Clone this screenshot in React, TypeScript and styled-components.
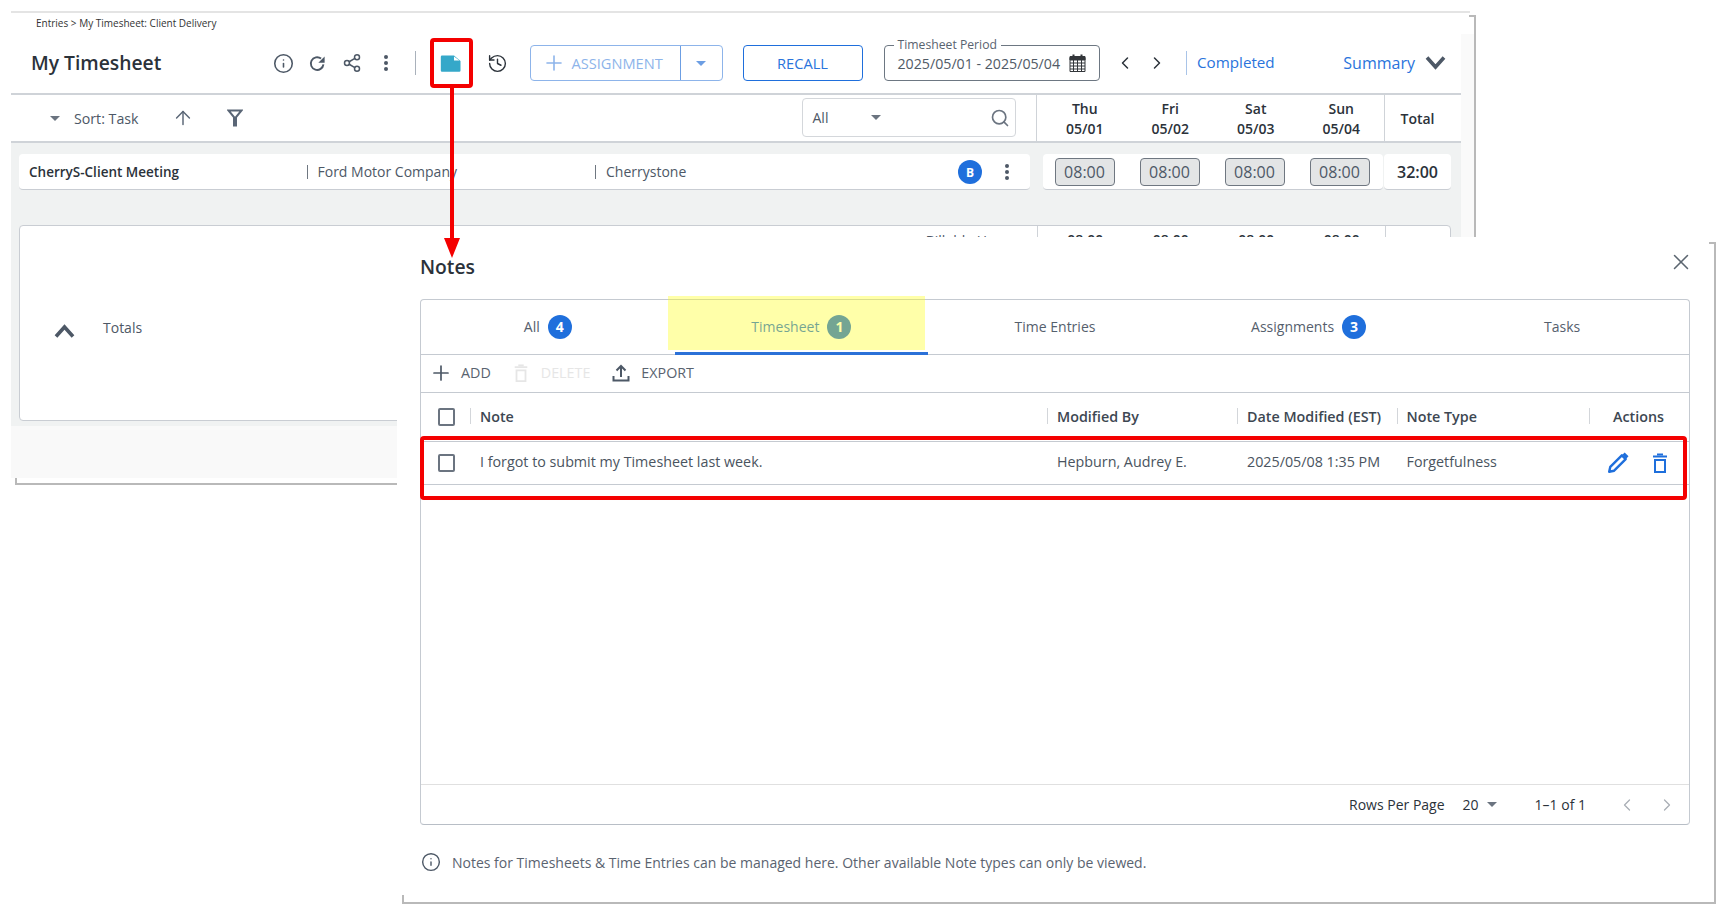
import React from "react";
import styled, { createGlobalStyle } from "styled-components";
import { ArrowUp, ChevronLeft, ChevronRight, History, Info, Plus, Search, Share2, X } from "lucide-react";

const Global = createGlobalStyle`
  html, body { margin: 0; padding: 0; background: #fff; }
  body { font-family: "Open Sans", "Noto Sans", sans-serif; font-size: 14px; color: #3f4852; }
  * { box-sizing: border-box; }
`;

const Page = styled.div`
  position: relative;
  width: 1727px;
  height: 915px;
  overflow: hidden;
  background: #fff;
`;

/* ---------- background window ---------- */
const Frame = styled.div`
  position: absolute;
  left: 11px;
  top: 11px;
  width: 1465px;
  height: 474px;
  background: linear-gradient(#fafafa, #fafafa) right 2px top 23px / 13px 444px no-repeat;
  &::before {
    content: "";
    position: absolute;
    left: 4px;
    top: 4px;
    right: 0;
    bottom: 0;
    border-right: 2px solid #b9b9b9;
    border-bottom: 2px solid #b9b9b9;
    background:
      linear-gradient(#b9b9b9, #b9b9b9) top right / 5px 2px no-repeat,
      linear-gradient(#b9b9b9, #b9b9b9) bottom left / 2px 7px no-repeat;
  }
`;

const TopLine = styled.div`
  width: 1459px;
  height: 2px;
  background: #e4e4e4;
`;

const Win = styled.div`
  position: relative;
  width: 1450px;
  display: flex;
  flex-direction: column;
`;

const Header = styled.header`
  height: 80px;
  background: #fff;
`;

const Breadcrumb = styled.div`
  font-size: 10px;
  line-height: 12px;
  padding: 4px 0 0 25px;
  color: #333;
`;

const TitleRow = styled.div`
  display: flex;
  align-items: center;
  height: 36px;
  margin-top: 16px;
  padding: 0 15px 0 20px;
`;

const Title = styled.h1`
  flex: 0 0 235.5px;
  margin: 0;
  font-size: 19.3px;
  line-height: 28px;
  font-weight: 600;
  color: #2b323a;
`;

const IconBtn = styled.span<{ $ml?: number; $color?: string; $w?: number; $push?: boolean }>`
  flex: 0 0 ${(p) => p.$w ?? 34}px;
  margin-left: ${(p) => (p.$push ? "auto" : `${p.$ml ?? 0}px`)};
  height: 24px;
  display: inline-flex;
  align-items: center;
  justify-content: center;
  color: ${(p) => p.$color ?? "#4d5866"};
`;

const VSep = styled.span<{ $ml: number; $color?: string }>`
  flex: 0 0 1px;
  height: 24px;
  margin-left: ${(p) => p.$ml}px;
  background: ${(p) => p.$color ?? "#a9b1bb"};
`;

const SplitBtn = styled.div`
  flex: 0 0 193px;
  margin-left: 15px;
  height: 36px;
  display: flex;
  border: 1px solid #8db4ea;
  border-radius: 4px;
  color: #8db4ea;
`;

const SplitMain = styled.div`
  flex: 1;
  display: flex;
  align-items: center;
  gap: 6px;
  padding-left: 11px;
  font-size: 14.6px;
  border-right: 1px solid #6c9ee3;
`;

const SplitCaret = styled.div`
  flex: 0 0 41px;
  display: flex;
  align-items: center;
  justify-content: center;
`;

const Caret = styled.span<{ $color?: string; $ml?: number }>`
  display: inline-block;
  width: 0;
  height: 0;
  margin-left: ${(p) => p.$ml ?? 0}px;
  border-left: 5px solid transparent;
  border-right: 5px solid transparent;
  border-top: 5px solid ${(p) => p.$color ?? "#6b7480"};
`;

const OutlineBtn = styled.div`
  flex: 0 0 120px;
  margin-left: 20px;
  height: 36px;
  display: flex;
  align-items: center;
  justify-content: center;
  border: 1px solid #1f6fdc;
  border-radius: 4px;
  color: #2a74dc;
  font-size: 14.7px;
`;

const PeriodField = styled.fieldset`
  flex: 0 0 216.5px;
  position: relative;
  margin: 0 0 0 21px;
  height: 36px;
  padding: 0 0 0 13px;
  border: 1px solid #6d7782;
  border-radius: 4px;
  display: flex;
  align-items: center;
  gap: 9px;
  white-space: nowrap;
  font-size: 14.2px;
  color: #505a66;
`;

const PeriodLabel = styled.span`
  position: absolute;
  left: 9px;
  top: -9px;
  padding: 0 4px;
  background: #fff;
  font-size: 12.2px;
  line-height: 15px;
  color: #59636f;
`;

const StatusLink = styled.span`
  margin: -2px 0 0 10px;
  font-size: 15.2px;
  color: #2a74dc;
`;

const SummaryLink = styled.span`
  margin-left: auto;
  display: flex;
  align-items: center;
  gap: 10px;
  font-size: 16px;
  color: #2a74dc;
`;

const SubBar = styled.div`
  height: 50px;
  display: flex;
  align-items: stretch;
  padding-right: 11px;
  background: #fff;
  border-top: 2px solid #cfd3d8;
  border-bottom: 2px solid #cfd3d8;
`;

const SortGroup = styled.div`
  display: flex;
  align-items: center;
  padding-left: 39px;
  color: #4d5866;
`;

const SortText = styled.span`
  margin-left: 14px;
  font-size: 14.2px;
  white-space: nowrap;
`;

const SearchBox = styled.div`
  flex: 0 0 214.5px;
  margin: 3px 0 4px auto;
  padding: 0 3px 0 10px;
  display: flex;
  align-items: center;
  border: 1px solid #d4d7db;
  border-radius: 4px;
  font-size: 14px;
  color: #4d5866;
`;

const DateHead = styled.div`
  display: flex;
  margin-left: 20px;
  padding-left: 5px;
  border-left: 1px solid #cfd3d8;
`;

const DayCol = styled.div`
  width: 85.5px;
  padding-top: 4px;
  text-align: center;
  font-size: 14px;
  line-height: 20px;
  font-weight: 600;
  color: #2b323a;
`;

const TotalHead = styled.div`
  width: 66px;
  display: flex;
  align-items: center;
  justify-content: center;
  border-left: 1px solid #cfd3d8;
  font-size: 14px;
  font-weight: 600;
  color: #2b323a;
`;

const Body = styled.div`
  padding: 11px 10px 5px 8px;
  background: #f0f2f2;
`;

const EntryRow = styled.div`
  display: flex;
  height: 36px;
`;

const Card = styled.div<{ $w: number; $ml?: number }>`
  flex: 0 0 ${(p) => p.$w}px;
  margin-left: ${(p) => p.$ml ?? 0}px;
  padding-top: 1px;
  display: flex;
  align-items: center;
  background: #fff;
  border-bottom: 1px solid #c9cdd3;
  border-radius: 4px;
`;

const TaskCell = styled.span<{ $w: number; $bold?: boolean }>`
  flex: 0 0 ${(p) => p.$w}px;
  padding-left: 10px;
  font-weight: ${(p) => (p.$bold ? 600 : 400)};
  color: ${(p) => (p.$bold ? "#2b323a" : "#4d5866")};
  font-size: ${(p) => (p.$bold ? 13.5 : 14)}px;
  line-height: 14px;
  white-space: nowrap;
  & + & {
    border-left: 1px solid #6f7781;
  }
`;

const RoundBadge = styled.span<{ $size?: number }>`
  flex: 0 0 24px;
  width: 24px;
  height: 24px;
  display: inline-flex;
  align-items: center;
  justify-content: center;
  border-radius: 50%;
  background: #1f6fdc;
  color: #fff;
  font-size: ${(p) => p.$size ?? 12}px;
  font-weight: 700;
`;

const HourBox = styled.div<{ $first?: boolean }>`
  flex: 0 0 60px;
  height: 28px;
  margin-left: ${(p) => (p.$first ? 12 : 25)}px;
  display: flex;
  align-items: center;
  justify-content: center;
  background: #e3e5e6;
  border: 1px solid #6f7781;
  border-radius: 4px;
  font-size: 16px;
  color: #4d5866;
`;

const TotalValue = styled.span`
  width: 100%;
  text-align: center;
  font-size: 16px;
  font-weight: 600;
  color: #2b323a;
`;

const TotalsCard = styled.div`
  height: 196px;
  margin-top: 35px;
  background: #fff;
  border: 1px solid #c9cdd3;
  border-radius: 4px;
`;

const TotalsTop = styled.div`
  display: flex;
  height: 40px;
  font-size: 14px;
`;

const TotalsLabel = styled.div`
  flex: 0 0 1016.5px;
  padding: 5px 20px 0 0;
  text-align: right;
  color: #4d5866;
`;

const TotalsDays = styled.div`
  display: flex;
  border-left: 1px solid #cfd3d8;
  border-right: 1px solid #cfd3d8;
  padding-left: 5px;
`;

const TotalsDay = styled.div`
  width: 85.5px;
  padding-top: 4px;
  text-align: center;
  font-weight: 600;
  color: #2b323a;
`;

const TotalsName = styled.div`
  display: flex;
  align-items: center;
  gap: 28px;
  margin: 50px 0 0 34px;
  color: #4d5866;
  font-size: 14px;
`;

const TotalsChevron = styled.span`
  display: inline-flex;
  margin-top: 8px;
`;

const Foot = styled.div`
  height: 52px;
  background: #f9f9f9;
`;

/* ---------- notes dialog ---------- */
const Dialog = styled.section`
  position: absolute;
  left: 397px;
  top: 237px;
  width: 1319px;
  height: 667px;
  padding: 15px 26px 0 23px;
  background: #fff;
  &::before {
    content: "";
    position: absolute;
    left: 5px;
    top: 5px;
    right: 0;
    bottom: 0;
    border-right: 2px solid #b9b9b9;
    border-bottom: 2px solid #b9b9b9;
    background:
      linear-gradient(#b9b9b9, #b9b9b9) top right / 5px 2px no-repeat,
      linear-gradient(#b9b9b9, #b9b9b9) bottom left / 2px 7px no-repeat;
    pointer-events: none;
  }
`;

const DialogHead = styled.div`
  display: flex;
  align-items: center;
  justify-content: space-between;
  height: 28px;
  color: #5b6570;
`;

const DialogTitle = styled.h2`
  margin: 0;
  font-size: 19.3px;
  font-weight: 600;
  color: #2b323a;
`;

const CloseBtn = styled.span`
  display: inline-flex;
  margin: -8px -4px 0 0;
`;

const NotesCard = styled.div`
  height: 526px;
  margin-top: 19px;
  display: flex;
  flex-direction: column;
  border: 1px solid #c5cad1;
  border-bottom-color: #b8bec6;
  border-radius: 4px;
`;

const Tabs = styled.div`
  flex: 0 0 55px;
  display: grid;
  grid-template-columns: repeat(5, 1fr);
  border-bottom: 1px solid #c5cad1;
`;

const Tab = styled.div<{ $active?: boolean }>`
  display: flex;
  align-items: center;
  justify-content: center;
  gap: 8px;
  margin-bottom: -1px;
  padding-top: 1px;
  font-size: 14px;
  font-weight: 500;
  color: ${(p) => (p.$active ? "#1f6fdc" : "#55606d")};
  border-bottom: 3px solid ${(p) => (p.$active ? "#2b71d8" : "transparent")};
`;

const ActionBar = styled.div`
  flex: 0 0 38px;
  display: flex;
  align-items: center;
  padding: 0 0 2px 8px;
  border-bottom: 1px solid #c5cad1;
`;

const ActionItem = styled.div<{ $disabled?: boolean; $ml?: number; $gap: number }>`
  display: flex;
  align-items: center;
  gap: ${(p) => p.$gap}px;
  margin-left: ${(p) => p.$ml ?? 0}px;
  font-size: 14.3px;
  color: ${(p) => (p.$disabled ? "#e6e6e6" : "#59636f")};
`;

const GridRow = styled.div<{ $head?: boolean }>`
  display: grid;
  grid-template-columns: 49px 577px 190px 159.5px 192.5px 99px;
  align-items: center;
  height: ${(p) => (p.$head ? 48 : 44)}px;
  flex: 0 0 auto;
  font-size: 14.3px;
  font-weight: ${(p) => (p.$head ? 600 : 400)};
  color: ${(p) => (p.$head ? "#3d4752" : "#4a5460")};
  border-bottom: ${(p) => (p.$head ? "none" : "1px solid #c5cad1")};
  border-top: ${(p) => (p.$head ? "none" : "1px solid #c5cad1")};
`;

const CheckCell = styled.div`
  padding-left: 16.5px;
  display: flex;
  align-items: center;
`;

const Check = styled.span`
  width: 17px;
  height: 18px;
  border: 2px solid #6b7480;
  border-radius: 2px;
`;

const Cell = styled.div<{ $sep?: boolean; $center?: boolean }>`
  position: relative;
  padding-left: ${(p) => (p.$center ? 0 : 10)}px;
  text-align: ${(p) => (p.$center ? "center" : "left")};
  white-space: nowrap;
  margin-top: ${(p) => (p.$sep ? -2 : -4)}px;
  &::before {
    content: ${(p) => (p.$sep ? '""' : "none")};
    position: absolute;
    left: 0;
    top: 1px;
    height: 16px;
    width: 1px;
    background: #d3d6da;
  }
`;

const ActionsCell = styled.div`
  display: flex;
  align-items: center;
  gap: 21px;
  padding-left: 18px;
  color: #1f6fdc;
`;

const Spacer = styled.div`
  flex: 1;
`;

const Pager = styled.div`
  flex: 0 0 40px;
  display: flex;
  align-items: center;
  justify-content: flex-end;
  padding-right: 12px;
  border-top: 1px solid #e0e0e0;
  font-size: 14px;
  color: #2b323a;
`;

const PagerText = styled.span<{ $ml?: number }>`
  margin-left: ${(p) => p.$ml ?? 0}px;
  white-space: nowrap;
`;

const PagerNav = styled.span<{ $ml: number }>`
  display: inline-flex;
  margin-left: ${(p) => p.$ml}px;
  color: #a9aeb5;
`;

const InfoLine = styled.div`
  display: flex;
  align-items: center;
  gap: 11px;
  margin: 27px 0 0 1px;
  height: 20px;
  font-size: 14px;
  color: #5a6370;
`;

/* ---------- annotations ---------- */
const RedBox = styled.div<{ $x: number; $y: number; $w: number; $h: number }>`
  position: absolute;
  left: ${(p) => p.$x}px;
  top: ${(p) => p.$y}px;
  width: ${(p) => p.$w}px;
  height: ${(p) => p.$h}px;
  border: 4px solid #f40000;
  border-radius: 4px;
`;

const Highlight = styled.div`
  position: absolute;
  left: 668px;
  top: 296px;
  width: 257px;
  height: 54px;
  background: rgba(255, 255, 30, 0.38);
`;

const Arrow = styled.svg`
  position: absolute;
  left: 442px;
  top: 86px;
`;

const NoteGlyph = () => (
  <svg width="21" height="17" viewBox="0 0 21 17">
    <path d="M2 .5h12L20.500 6v9.500a1.200 1.200 0 0 1-1.200 1.200H2a1.200 1.200 0 0 1-1.200-1.200V1.700A1.200 1.200 0 0 1 2 .5z" fill="#35a8c9" />
    <path d="M14 1.500v4h5.500z" fill="#fff" />
  </svg>
);

const RefreshGlyph = () => (
  <svg width="19" height="19" viewBox="0 0 24 24" fill="none">
    <path d="M19.500 13a8 8 0 1 1-3-7.200" stroke="currentColor" strokeWidth="2.400" />
    <path d="M21 3v8h-8z" fill="currentColor" />
  </svg>
);

const DotsGlyph = () => (
  <svg width="6" height="18" viewBox="0 0 6 18" fill="currentColor">
    <circle cx="3" cy="3" r="2" />
    <circle cx="3" cy="9" r="2" />
    <circle cx="3" cy="15" r="2" />
  </svg>
);

const CalendarGlyph = () => (
  <svg width="17" height="18" viewBox="0 0 17 18" fill="none" stroke="#33363a" strokeWidth="1">
    <path d="M1 2.500h15v15H1z" />
    <path d="M1 3.500h15V6H1z" fill="#33363a" />
    <path d="M1 9h15M1 12h15M1 15h15M4.500 6v11M8.500 6v11M12.500 6v11" />
    <path d="M4.500 .5v3M12.500 .5v3" strokeWidth="2" />
  </svg>
);

const FilterGlyph = () => (
  <svg width="16" height="18" viewBox="0 0 16 18" fill="none">
    <path d="M1.500 1.500h13L8 9.500z" stroke="#5a6676" strokeWidth="2" />
    <path d="M6 8h4v9.500H6z" fill="#5a6676" />
  </svg>
);

const TrashGlyph = ({ size = 20, color = "currentColor" }: { size?: number; color?: string }) => (
  <svg width={size} height={size} viewBox="0 0 20 20" fill="none" stroke={color}>
    <path d="M3 3.500h14" strokeWidth="2" />
    <path d="M7 1.500h6" strokeWidth="2" />
    <path d="M5 7h10v12H5z" strokeWidth="2" />
  </svg>
);

const PencilGlyph = () => (
  <svg width="22" height="22" viewBox="0 0 20 20" fill="none" stroke="currentColor">
    <path d="M2 18l1-4.500L13.500 3 17 6.500 6.500 17z" strokeWidth="2.200" strokeLinejoin="round" />
    <path d="M15 1.500L18.500 5" strokeWidth="3" />
  </svg>
);

const UploadGlyph = () => (
  <svg width="18" height="18" viewBox="0 0 18 18" fill="none" stroke="#4d5866" strokeWidth="2">
    <path d="M9 13V2.500M4.500 6.500L9 2l4.500 4.500" />
    <path d="M1.500 12v4.500h15V12" />
  </svg>
);

const BigChevron = ({ up }: { up?: boolean }) => (
  <svg width="21" height="14" viewBox="0 0 21 14" fill="none" stroke="#4d5866" strokeWidth="3.600">
    <path d={up ? "M2 12.500L10.500 3 19 12.500" : "M2 1.500L10.500 11 19 1.500"} />
  </svg>
);

const days = [
  ["Thu", "05/01"],
  ["Fri", "05/02"],
  ["Sat", "05/03"],
  ["Sun", "05/04"],
];

export default function App() {
  return (
    <Page>
      <Global />
      <Frame>
        <TopLine />
        <Win>
          <Header>
            <Breadcrumb>Entries &gt; My Timesheet: Client Delivery</Breadcrumb>
            <TitleRow>
              <Title>My Timesheet</Title>
              <IconBtn><Info size={21} strokeWidth={1.8} /></IconBtn>
              <IconBtn><RefreshGlyph /></IconBtn>
              <IconBtn><Share2 size={20} strokeWidth={1.8} /></IconBtn>
              <IconBtn><DotsGlyph /></IconBtn>
              <VSep $ml={12} />
              <IconBtn $ml={18}><NoteGlyph /></IconBtn>
              <IconBtn $ml={13} $color="#2b323a"><History size={21} strokeWidth={1.6} /></IconBtn>
              <SplitBtn>
                <SplitMain><Plus size={24} strokeWidth={1.6} />ASSIGNMENT</SplitMain>
                <SplitCaret><Caret $color="#6c9ee3" /></SplitCaret>
              </SplitBtn>
              <OutlineBtn>RECALL</OutlineBtn>
              <PeriodField>
                <PeriodLabel>Timesheet Period</PeriodLabel>
                2025/05/01 - 2025/05/04
                <CalendarGlyph />
              </PeriodField>
              <IconBtn $ml={9} $w={32} $color="#2b323a"><ChevronLeft size={20} strokeWidth={1.8} /></IconBtn>
              <IconBtn $w={32} $color="#2b323a"><ChevronRight size={20} strokeWidth={1.8} /></IconBtn>
              <VSep $ml={13} $color="#a9c4e8" />
              <StatusLink>Completed</StatusLink>
              <SummaryLink>Summary<BigChevron /></SummaryLink>
            </TitleRow>
          </Header>
          <SubBar>
            <SortGroup>
              <Caret />
              <SortText>Sort: Task</SortText>
              <IconBtn $ml={29} $w={30} $color="#5a6676"><ArrowUp size={22} strokeWidth={1.6} /></IconBtn>
              <IconBtn $ml={22} $w={30}><FilterGlyph /></IconBtn>
            </SortGroup>
            <SearchBox>
              All
              <Caret $ml={43} />
              <IconBtn $push $w={24} $color="#6b7480"><Search size={20} strokeWidth={2} /></IconBtn>
            </SearchBox>
            <DateHead>
              {days.map(([d, n]) => (
                <DayCol key={d}>{d}<br />{n}</DayCol>
              ))}
            </DateHead>
            <TotalHead>Total</TotalHead>
          </SubBar>
          <Body>
            <EntryRow>
              <Card $w={1011}>
                <TaskCell $w={287.5} $bold>CherryS-Client Meeting</TaskCell>
                <TaskCell $w={288.5}>Ford Motor Company</TaskCell>
                <TaskCell $w={363}>Cherrystone</TaskCell>
                <RoundBadge>B</RoundBadge>
                <IconBtn $ml={10} $w={30}><DotsGlyph /></IconBtn>
              </Card>
              <Card $w={340.5} $ml={12.5}>
                {[0, 1, 2, 3].map((i) => (
                  <HourBox key={i} $first={i === 0}>08:00</HourBox>
                ))}
              </Card>
              <Card $w={67} $ml={1}><TotalValue>32:00</TotalValue></Card>
            </EntryRow>
            <TotalsCard>
              <TotalsTop>
                <TotalsLabel>Billable Hours</TotalsLabel>
                <TotalsDays>
                  {[0, 1, 2, 3].map((i) => <TotalsDay key={i}>08:00</TotalsDay>)}
                </TotalsDays>
              </TotalsTop>
              <TotalsName>
                <TotalsChevron><BigChevron up /></TotalsChevron>
                Totals
              </TotalsName>
            </TotalsCard>
          </Body>
          <Foot />
        </Win>
      </Frame>

      <Dialog>
        <DialogHead>
          <DialogTitle>Notes</DialogTitle>
          <CloseBtn><X size={26} strokeWidth={1.4} /></CloseBtn>
        </DialogHead>
        <NotesCard>
          <Tabs>
            <Tab>All<RoundBadge $size={14}>4</RoundBadge></Tab>
            <Tab $active>Timesheet<RoundBadge $size={14}>1</RoundBadge></Tab>
            <Tab>Time Entries</Tab>
            <Tab>Assignments<RoundBadge $size={14}>3</RoundBadge></Tab>
            <Tab>Tasks</Tab>
          </Tabs>
          <ActionBar>
            <ActionItem $gap={8}><Plus size={24} color="#4d5866" strokeWidth={1.7} />ADD</ActionItem>
            <ActionItem $disabled $gap={11} $ml={21}><TrashGlyph size={18} color="#e6e6e6" />DELETE</ActionItem>
            <ActionItem $gap={11} $ml={22}><UploadGlyph />EXPORT</ActionItem>
          </ActionBar>
          <GridRow $head>
            <CheckCell><Check /></CheckCell>
            <Cell $sep>Note</Cell>
            <Cell $sep>Modified By</Cell>
            <Cell $sep>Date Modified (EST)</Cell>
            <Cell $sep>Note Type</Cell>
            <Cell $sep $center>Actions</Cell>
          </GridRow>
          <GridRow>
            <CheckCell><Check /></CheckCell>
            <Cell>I forgot to submit my Timesheet last week.</Cell>
            <Cell>Hepburn, Audrey E.</Cell>
            <Cell>2025/05/08 1:35 PM</Cell>
            <Cell>Forgetfulness</Cell>
            <ActionsCell><PencilGlyph /><TrashGlyph /></ActionsCell>
          </GridRow>
          <Spacer />
          <Pager>
            <PagerText>Rows Per Page</PagerText>
            <PagerText $ml={18}>20</PagerText>
            <Caret $ml={8} />
            <PagerText $ml={38}>1–1 of 1</PagerText>
            <PagerNav $ml={31}><ChevronLeft size={20} strokeWidth={1.5} /></PagerNav>
            <PagerNav $ml={20}><ChevronRight size={20} strokeWidth={1.5} /></PagerNav>
          </Pager>
        </NotesCard>
        <InfoLine>
          <Info size={20} strokeWidth={1.7} color="#4d5866" />
          Notes for Timesheets &amp; Time Entries can be managed here. Other available Note types can only be viewed.
        </InfoLine>
      </Dialog>

      <Highlight />
      <RedBox $x={430} $y={38} $w={43} $h={50} />
      <RedBox $x={420} $y={436} $w={1267} $h={64} />
      <Arrow width="20" height="172" viewBox="0 0 20 172">
        <path d="M8 0h4v152H8z" fill="#f40000" />
        <path d="M2 152h16l-8 20z" fill="#f40000" />
      </Arrow>
    </Page>
  );
}
